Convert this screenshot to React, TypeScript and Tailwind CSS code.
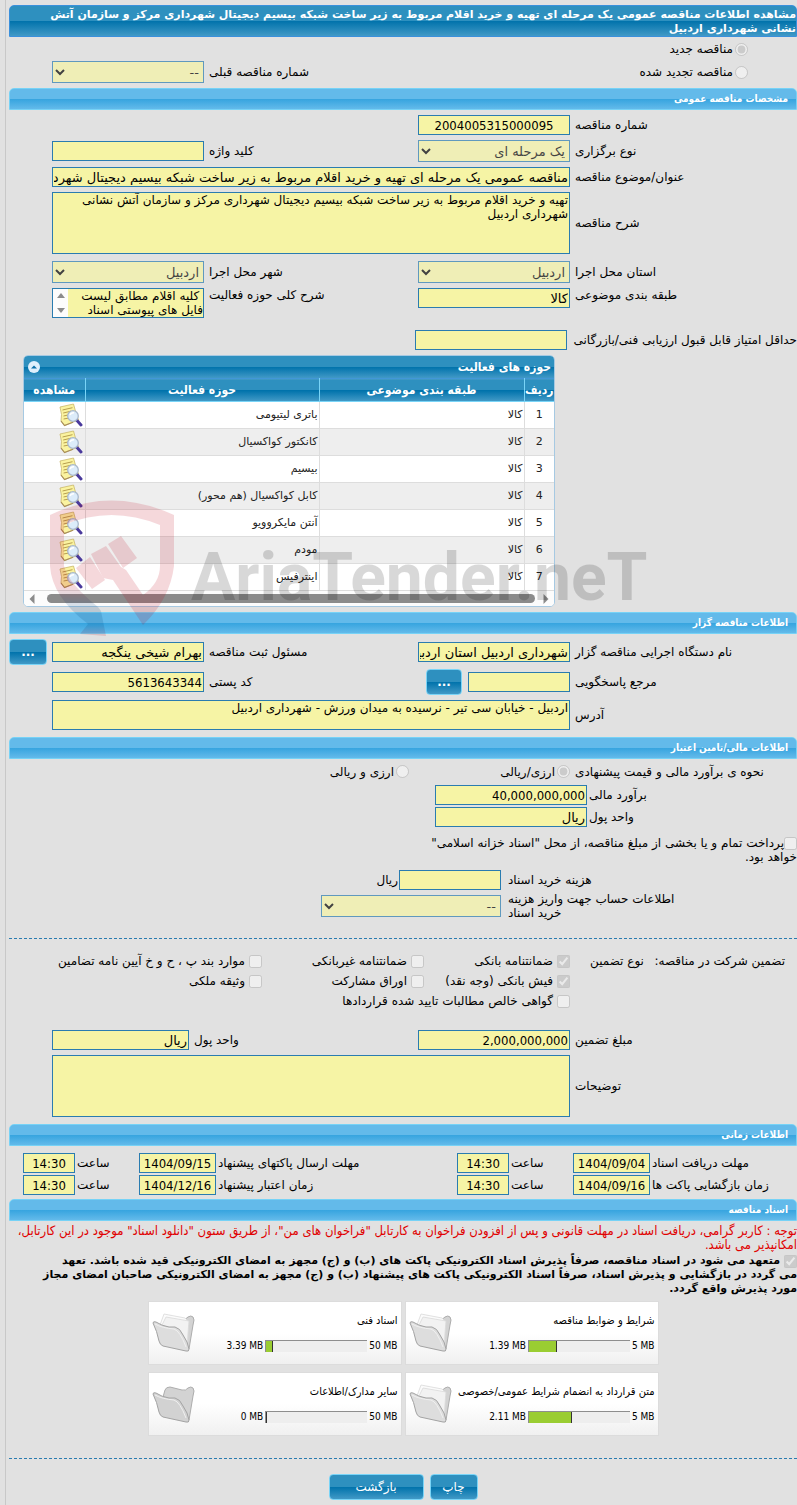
import type { ReactNode } from 'react';

const CONDENSED = "font-['DejaVu_Sans_Condensed','DejaVu_Sans',sans-serif]";
const FIELD = 'block h-5 w-full min-w-0 border border-[#2a7cb0] bg-[#f6f4a5] px-px text-[13px] leading-[18px] text-black outline-none';
const AREA =
  'block w-full resize-none overflow-hidden border border-[#2a7cb0] bg-[#f6f4a5] px-px text-[12px] leading-[14px] text-black outline-none';
const ROW = 'grid grid-cols-[222px_152px_1fr_152px_38px] items-center gap-x-[5px]';
const LIGHT_BAR = 'bg-[linear-gradient(#63baea_0%,#63baea_50%,#36a4df_50%,#63baea_100%)]';
const DARK_BAR = 'bg-[linear-gradient(#2e90bf_0%,#2e90bf_50%,#0072ab_50%,#4199c6_100%)]';
const DASHES = 'h-px border-0 bg-[repeating-linear-gradient(to_right,#2a7cb0_0px,#2a7cb0_3px,transparent_3px,transparent_5px)]';

type TextFieldProps = {
  id: string;
  value?: string;
  numeric?: boolean;
  center?: boolean;
};

const TextField = ({ id, value = '', numeric = false, center = false }: TextFieldProps) => (
  <input
    id={id}
    type="text"
    readOnly
    defaultValue={value}
    className={`${FIELD} ${numeric ? CONDENSED : ''} ${center ? 'text-center' : ''}`}
  />
);

type LabelProps = {
  htmlFor: string;
  children: ReactNode;
};

const Label = ({ htmlFor, children }: LabelProps) => (
  <label htmlFor={htmlFor} className="block text-end">
    {children}
  </label>
);

const SelectField = ({ id, value }: { id: string; value: string }) => (
  <select
    id={id}
    disabled
    defaultValue={value}
    className="block h-[22px] w-full border border-[#2a7cb0] bg-[#f6f4a5] text-[13px] text-black opacity-70"
  >
    <option>{value}</option>
  </select>
);

const SectionBar = ({ children }: { children: ReactNode }) => (
  <h2
    className={`h-[22px] rounded-t-[5px] border border-[#76d2f6] px-2 text-[10px] leading-[20px] font-bold text-white ${CONDENSED} ${LIGHT_BAR}`}
  >
    {children}
  </h2>
);

type BlueButtonProps = {
  label: string;
  className: string;
};

const BlueButton = ({ label, className }: BlueButtonProps) => (
  <button
    type="button"
    className={`h-[26px] rounded-[4px] border border-[#79d4f7] text-[12px] text-white ${DARK_BAR} ${className}`}
  >
    {label}
  </button>
);

type TickProps = {
  id: string;
  label: string;
  checked?: boolean;
  className?: string;
};

const Tick = ({ id, label, checked = false, className = '' }: TickProps) => (
  <div className={`flex h-5 items-center gap-1 whitespace-nowrap ${className}`}>
    <input id={id} type="checkbox" disabled defaultChecked={checked} className="size-[13px] shrink-0" />
    <label htmlFor={id}>{label}</label>
  </div>
);

type RadioProps = {
  id: string;
  name: string;
  label: string;
  checked?: boolean;
};

const Radio = ({ id, name, label, checked = false }: RadioProps) => (
  <div className="flex items-center gap-[2px] whitespace-nowrap">
    <input id={id} name={name} type="radio" disabled defaultChecked={checked} className="size-[13px] shrink-0" />
    <label htmlFor={id}>{label}</label>
  </div>
);

const ViewIcon = () => (
  <svg width="24" height="24" viewBox="0 0 24 24" aria-hidden="true">
    <path d="M1 4 L14.5 1 L17 10 L19.5 17 L5.5 22.5 L2 18 Q3.500 12 1 4Z" fill="#faf3a0" stroke="#c9b76a" strokeWidth="0.8" />
    <path d="M3.500 7 L13.500 4.700 M4.200 10 L12 8.200 M4.500 13 L10 11.800 M4.600 16 L10 15" stroke="#b89f4e" strokeWidth="1" />
    <path d="M2 18 L5.5 22.5 L14 19.300" fill="none" stroke="#a98f5a" strokeWidth="1.2" />
    <path d="M18 17.500 L22 22" stroke="#4a3a9c" strokeWidth="3" strokeLinecap="round" />
    <circle cx="14" cy="13" r="5.3" fill="#dcecfa" stroke="#a9b8cc" strokeWidth="1.3" />
    <path d="M11 12 Q12 9.500 15 9.700" fill="none" stroke="#ffffff" strokeWidth="1.4" />
  </svg>
);

const FolderIcon = ({ filled }: { filled: boolean }) => (
  <svg width="44" height="40" viewBox="0 0 44 40" aria-hidden="true">
    <path
      d="M11 13 L13 6 Q14 3 18 3 L30 6 Q34 7 36 4 Q39 2 41 4 Q43 6 41 12 L37 36Z"
      fill="#d3d3d3"
      stroke="#adadad"
      strokeWidth="1"
    />
    {filled && (
      <g stroke="#d9d9d9" strokeWidth="0.8">
        <path d="M8 12 L12 1 L33 5 L36 8 L36 32 L30 20Z" fill="#fbfbfb" />
        <path d="M10 12 L14 4 L37 8 L35 32 L30 20Z" fill="#f2f2f2" />
      </g>
    )}
    <path
      d="M1 10 Q1 8 4 9 Q10 13 17 14 L23 14 Q28 15 31 22 Q36 29 37 36 Q37 39 34 38 L11 33 Q8 32 7 28 Q5 18 1 10Z"
      fill={filled ? '#dddddd' : '#d2d2d2'}
      stroke="#a3a3a3"
      strokeWidth="1"
    />
    <path d="M3 11 Q10 15 22 16 Q28 18 34 34" fill="none" stroke="#f0f0f0" strokeWidth="1" />
  </svg>
);

const activities = [
  'باتری لیتیومی',
  'کانکتور کواکسیال',
  'بیسیم',
  'کابل کواکسیال (هم محور)',
  'آنتن مایکروویو',
  'مودم',
  'اینترفیس'
];

const ActivityTable = () => (
  <div className="ms-[242px] me-[14px] overflow-hidden rounded-[5px] border border-[#a6c9e2] bg-white">
    <div className={`flex h-[22px] items-center justify-between px-[3px] ${DARK_BAR}`}>
      <h3 className={`text-[12px] font-bold text-white ${CONDENSED}`}>حوزه های فعالیت</h3>
      <button
        type="button"
        aria-label="بستن"
        className="mx-px flex size-3 items-center justify-center rounded-full bg-[#dfeffc]"
      >
        <svg width="6" height="4" viewBox="0 0 6 4" aria-hidden="true">
          <path d="M0 3.500 L3 0.500 L6 3.500Z" fill="#0b6fa8" />
        </svg>
      </button>
    </div>
    <table className="w-full table-fixed border-collapse text-[11px] leading-[14px] text-[#222222]">
      <colgroup>
        <col className="w-[30px]" />
        <col className="w-[205px]" />
        <col />
        <col className="w-[61px]" />
      </colgroup>
      <thead>
        <tr
          className={`h-[23px] border-t border-b border-t-[#4297d7] border-b-[#79d4f7] text-[12px] text-white ${CONDENSED} ${DARK_BAR}`}
        >
          <th className="border-e border-[#79d4f7] p-0">ردیف</th>
          <th className="border-e border-[#79d4f7] p-0">طبقه بندی موضوعی</th>
          <th className="border-e border-[#79d4f7] p-0">حوزه فعالیت</th>
          <th className="p-0">مشاهده</th>
        </tr>
      </thead>
      <tbody>
        {activities.map((activity, i) => (
          <tr key={activity} className="h-[27px] border-b border-[#dddddd] even:bg-[#eeeeee]">
            <td className="border-e border-[#dddddd] p-0 text-center">{i + 1}</td>
            <td className="border-e border-[#dddddd] px-px py-0">کالا</td>
            <td className="border-e border-[#dddddd] px-px py-0">{activity}</td>
            <td className="px-[2px] py-0">
              <button type="button" aria-label="مشاهده" className="block">
                <ViewIcon />
              </button>
            </td>
          </tr>
        ))}
      </tbody>
    </table>
    <div className="flex h-[15px] items-center bg-[#fcfcfc] px-[5px]">
      <svg width="6" height="10" viewBox="0 0 6 10" aria-hidden="true">
        <path d="M0.500 0 L5.500 5 L0.500 10Z" fill="#8b8b8b" />
      </svg>
      <div className="ms-2 me-3 h-[9px] flex-1 rounded-full bg-[#8b8b8b]" />
      <svg width="6" height="10" viewBox="0 0 6 10" aria-hidden="true">
        <path d="M5.500 0 L0.500 5 L5.500 10Z" fill="#8b8b8b" />
      </svg>
    </div>
  </div>
);

const Watermark = () => (
  <div dir="ltr" className="pointer-events-none absolute top-[144px] left-[40px] flex opacity-15">
    <svg width="126" height="138" viewBox="0 0 126 138" aria-hidden="true">
      <defs>
        <linearGradient id="shield-tail" gradientUnits="userSpaceOnUse" x1="0" y1="67" x2="0" y2="137">
          <stop offset="0.3" stopColor="#c00018" />
          <stop offset="0.55" stopColor="#00407a" />
          <stop offset="0.85" stopColor="#00407a" />
          <stop offset="1" stopColor="#c00018" />
        </linearGradient>
      </defs>
      <path
        d="M1 67 L1 16 Q62 -13 125 16 L125 67 Q121 100 94 126 L64 81 L54 79 L42 55 L57 47 L72 68 L77 71 L94 96 Q111 84 111 67 L111 26 Q62 6 15 26 L15 67Z"
        fill="#c00018"
      />
      <path d="M59 45 L72 37 L88 59 L74 69Z M27 69 L41 58 L56 81 L43 90Z" fill="#c00018" />
      <path d="M1 67 L15 67 Q19 84 49 108 L52 112 L57 137 L31 135 L39 125 Q3 98 1 67Z" fill="url(#shield-tail)" />
    </svg>
    <span className="ml-4 pt-[34px] font-[Roboto,sans-serif] text-[66px] leading-[90px] font-bold text-black">
      AriaTender.neT
    </span>
  </div>
);

const documents = [
  { title: 'شرایط و ضوابط مناقصه', used: 1.39, limit: 5 },
  { title: 'اسناد فنی', used: 3.39, limit: 50 },
  { title: 'متن قرارداد به انضمام شرایط عمومی/خصوصی', used: 2.11, limit: 5 },
  { title: 'سایر مدارک/اطلاعات', used: 0, limit: 50 }
];

const DocumentCard = ({ title, used, limit }: (typeof documents)[number]) => (
  <a
    href="#"
    dir="ltr"
    className={`flex h-16 items-center border border-[#dcdcdc] bg-[linear-gradient(#ffffff_50%,#f0f0f0)] px-[3px] text-[11px] text-black ${CONDENSED}`}
  >
    <FolderIcon filled={used > 0} />
    <div className="flex flex-1 flex-col items-end gap-[11px]">
      <span dir="rtl" className="whitespace-nowrap">
        {title}
      </span>
      <div className="flex items-center gap-[2px] text-[10px] leading-[13px] whitespace-nowrap">
        <span>{used} MB</span>
        <div className="h-3 w-[102px] border-t border-l border-[#8e8e8e] bg-[#eeeeee]">
          <div className="h-full border-r border-[#333333] bg-[#9acd32]" style={{ width: `${(used / limit) * 100}%` }} />
        </div>
        <span>{limit} MB</span>
      </div>
    </div>
  </a>
);

const DeadlineRow = ({ fields }: { fields: { id: string; label: string; date: string }[] }) => (
  <div className="grid grid-cols-[145px_77px_60px_52px_1fr_77px_60px_52px_12px] items-center gap-x-[2px] whitespace-nowrap">
    {fields.map(({ id, label, date }) => (
      <div key={id} className="contents">
        <Label htmlFor={`${id}-date`}>{label}</Label>
        <TextField id={`${id}-date`} value={date} numeric center />
        <Label htmlFor={`${id}-time`}>ساعت</Label>
        <TextField id={`${id}-time`} value="14:30" numeric center />
      </div>
    ))}
  </div>
);

export default function App() {
  return (
    <div
      dir="rtl"
      className="bg-[#e1e1e1] pl-[5px] font-['DejaVu_Sans',sans-serif] text-[12px] leading-[14px] text-black"
    >
      <main className="border-l border-[#c8c8c8] pt-[5px] pb-[5px] pl-[3px]">
        <h1 className={`min-h-8 rounded-t-[5px] border border-[#3a90dc] pt-[2px] text-[11px] font-bold text-white ${DARK_BAR}`}>
          مشاهده اطلاعات مناقصه عمومی یک مرحله ای تهیه و خرید اقلام مربوط به زیر ساخت شبکه بیسیم دیجیتال شهرداری مرکز و
          سازمان آتش
          <br />
          نشانی شهرداری اردبیل
        </h1>

        <div className="mt-1 flex h-4 items-center ps-[49px]">
          <Radio id="tender-new" name="tender-kind" label="مناقصه جدید" checked />
        </div>
        <div className={`mt-1 ${ROW}`}>
          <div className="col-span-2 ps-[49px]">
            <Radio id="tender-renewed" name="tender-kind" label="مناقصه تجدید شده" />
          </div>
          <Label htmlFor="previous-number">شماره مناقصه قبلی</Label>
          <SelectField id="previous-number" value="--" />
        </div>

        <section className="mt-[5px]">
          <SectionBar>مشخصات مناقصه عمومی</SectionBar>
          <div className="mt-[5px] flex flex-col gap-[5px]">
            <div className={ROW}>
              <Label htmlFor="tender-number">شماره مناقصه</Label>
              <TextField id="tender-number" value="2004005315000095" numeric center />
            </div>
            <div className={ROW}>
              <Label htmlFor="tender-type">نوع برگزاری</Label>
              <SelectField id="tender-type" value="یک مرحله ای" />
              <Label htmlFor="keyword">کلید واژه</Label>
              <TextField id="keyword" />
            </div>
            <div className={ROW}>
              <Label htmlFor="subject">عنوان/موضوع مناقصه</Label>
              <div className="col-span-3">
                <TextField
                  id="subject"
                  value="مناقصه عمومی یک مرحله ای تهیه و خرید اقلام مربوط به زیر ساخت شبکه بیسیم دیجیتال شهرداری مرکز و سازمان آتش نشانی شهرداری اردبیل"
                />
              </div>
            </div>
            <div className={ROW}>
              <Label htmlFor="description">شرح مناقصه</Label>
              <textarea
                id="description"
                readOnly
                defaultValue="تهیه و خرید اقلام مربوط به زیر ساخت شبکه بیسیم دیجیتال شهرداری مرکز و سازمان آتش نشانی شهرداری اردبیل"
                className={`col-span-3 h-[62px] ${AREA}`}
              />
            </div>
            <div className={`mt-[2px] ${ROW}`}>
              <Label htmlFor="province">استان محل اجرا</Label>
              <SelectField id="province" value="اردبیل" />
              <Label htmlFor="city">شهر محل اجرا</Label>
              <SelectField id="city" value="اردبیل" />
            </div>
            <div className="grid grid-cols-[222px_152px_1fr_152px_38px] items-start gap-x-[5px]">
              <Label htmlFor="category">طبقه بندی موضوعی</Label>
              <TextField id="category" value="کالا" />
              <Label htmlFor="activity-summary">شرح کلی حوزه فعالیت</Label>
              <div className="flex h-[30px] border border-[#2a7cb0]">
                <textarea
                  id="activity-summary"
                  readOnly
                  defaultValue={' کلیه اقلام مطابق لیست\nفایل های پیوستی اسناد'}
                  className="block h-full min-w-0 flex-1 resize-none overflow-hidden bg-[#f6f4a5] text-[12px] leading-[14px] whitespace-pre outline-none"
                />
                <div className="flex w-[15px] flex-col items-center justify-between bg-[#fcfcfc] py-1">
                  <svg width="8" height="5" viewBox="0 0 8 5" aria-hidden="true">
                    <path d="M0 5 L4 0 L8 5Z" fill="#8b8b8b" />
                  </svg>
                  <svg width="8" height="5" viewBox="0 0 8 5" aria-hidden="true">
                    <path d="M0 0 L4 5 L8 0Z" fill="#8b8b8b" />
                  </svg>
                </div>
              </div>
            </div>
          </div>
          <div className="mt-3 grid grid-cols-[222px_152px] items-center gap-x-2 whitespace-nowrap">
            <Label htmlFor="min-score">حداقل امتیاز قابل قبول ارزیابی فنی/بازرگانی</Label>
            <TextField id="min-score" numeric />
          </div>
        </section>

        <div className="relative z-10 mt-[5px]">
          <ActivityTable />
          <Watermark />
        </div>

        <section className="mt-[5px]">
          <SectionBar>اطلاعات مناقصه گزار</SectionBar>
          <div className={`mt-[5px] ${ROW}`}>
            <Label htmlFor="organization">نام دستگاه اجرایی مناقصه گزار</Label>
            <TextField id="organization" value="شهرداری اردبیل استان اردبیل" />
            <Label htmlFor="registrar">مسئول ثبت مناقصه</Label>
            <TextField id="registrar" value="بهرام شیخی ینگجه" />
            <BlueButton label="..." className="w-full font-bold" />
          </div>
          <div className={`mt-1 ${ROW}`}>
            <Label htmlFor="contact">مرجع پاسخگویی</Label>
            <div className="flex items-center gap-[6px]">
              <div className="w-[102px]">
                <TextField id="contact" />
              </div>
              <BlueButton label="..." className="w-9 font-bold" />
            </div>
            <Label htmlFor="postal-code">کد پستی</Label>
            <TextField id="postal-code" value="5613643344" numeric />
          </div>
          <div className={`mt-[5px] ${ROW}`}>
            <Label htmlFor="address">آدرس</Label>
            <textarea
              id="address"
              readOnly
              defaultValue="اردبیل - خیابان سی تیر - نرسیده به میدان ورزش - شهرداری اردبیل"
              className={`col-span-3 h-[30px] ${AREA}`}
            />
          </div>
        </section>

        <section className="mt-[7px]">
          <SectionBar>اطلاعات مالی/تامین اعتبار</SectionBar>
          <div className="mt-1 grid h-[17px] grid-cols-[222px_156px_1fr] items-center gap-x-[5px]">
            <span className="text-end">نحوه ی برآورد مالی و قیمت پیشنهادی</span>
            <Radio id="rial-only" name="currency-kind" label="ارزی/ریالی" checked />
            <Radio id="rial-and-foreign" name="currency-kind" label="ارزی و ریالی" />
          </div>
          <div className="mt-[5px] grid grid-cols-[208px_152px] items-center gap-x-[2px] gap-y-[2px]">
            <Label htmlFor="estimate">برآورد مالی</Label>
            <TextField id="estimate" value="40,000,000,000" numeric />
            <Label htmlFor="estimate-unit">واحد پول</Label>
            <TextField id="estimate-unit" value="ریال" />
          </div>
          <div className="mt-[9px] max-w-[380px]">
            <input id="treasury" type="checkbox" disabled className="size-[13px] align-bottom" />
            <label htmlFor="treasury">پرداخت تمام و یا بخشی از مبلغ مناقصه، از محل "اسناد خزانه اسلامی" خواهد بود.</label>
          </div>
          <div className="mt-[6px] grid grid-cols-[289px_102px_1fr] items-center gap-x-[7px]">
            <Label htmlFor="documents-cost">هزینه خرید اسناد</Label>
            <TextField id="documents-cost" numeric />
            <span className="-ms-[6px]">ریال</span>
          </div>
          <div className="mt-[2px] grid grid-cols-[289px_180px] items-center gap-x-[7px]">
            <div className="ps-[120px]">
              <Label htmlFor="deposit-account">اطلاعات حساب جهت واریز هزینه خرید اسناد</Label>
            </div>
            <SelectField id="deposit-account" value="--" />
          </div>
        </section>

        <hr className={`mt-[18px] ${DASHES}`} />

        <section className="mt-3">
          <div className="grid grid-cols-[222px_141px_157px_1fr] items-center gap-x-[5px]">
            <div className="flex justify-between ps-3 pe-[15px] whitespace-nowrap">
              <span>تضمین شرکت در مناقصه:</span>
              <span>نوع تضمین</span>
            </div>
            <Tick id="bank-guarantee" label="ضمانتنامه بانکی" checked />
            <Tick id="non-bank-guarantee" label="ضمانتنامه غیربانکی" />
            <Tick id="bylaw-items" label="موارد بند پ ، ح و خ آیین نامه تضامین" />
            <Tick id="bank-slip" label="فیش بانکی (وجه نقد)" checked className="col-start-2" />
            <Tick id="bonds" label="اوراق مشارکت" />
            <Tick id="property" label="وثیقه ملکی" />
            <Tick id="net-claims" label="گواهی خالص مطالبات تایید شده قراردادها" className="col-span-2 col-start-2" />
          </div>
          <div className="mt-[19px] grid grid-cols-[222px_152px_1fr_137px_38px] items-center gap-x-[5px]">
            <Label htmlFor="guarantee-amount">مبلغ تضمین</Label>
            <TextField id="guarantee-amount" value="2,000,000,000" numeric />
            <Label htmlFor="guarantee-unit">واحد پول</Label>
            <TextField id="guarantee-unit" value="ریال" />
          </div>
          <div className={`mt-[5px] ${ROW}`}>
            <Label htmlFor="notes">توضیحات</Label>
            <textarea id="notes" readOnly className={`col-span-3 h-[62px] ${AREA}`} />
          </div>
        </section>

        <section className="mt-[7px]">
          <SectionBar>اطلاعات زمانی</SectionBar>
          <div className="mt-[7px] flex flex-col gap-[2px]">
            <DeadlineRow
              fields={[
                { id: 'receive', label: 'مهلت دریافت اسناد', date: '1404/09/04' },
                { id: 'submit', label: 'مهلت ارسال پاکتهای پیشنهاد', date: '1404/09/15' }
              ]}
            />
            <DeadlineRow
              fields={[
                { id: 'opening', label: 'زمان بازگشایی پاکت ها', date: '1404/09/16' },
                { id: 'validity', label: 'زمان اعتبار پیشنهاد', date: '1404/12/16' }
              ]}
            />
          </div>
        </section>

        <section className="mt-1">
          <SectionBar>اسناد مناقصه</SectionBar>
          <p className={`mt-[3px] text-[13px] leading-[14px] text-[#e00000] ${CONDENSED}`}>
            توجه : کاربر گرامی، دریافت اسناد در مهلت قانونی و پس از افزودن فراخوان به کارتابل "فراخوان های من"، از طریق ستون
            "دانلود اسناد" موجود در این کارتابل، امکانپذیر می باشد.
          </p>
          <div className="mt-[2px] text-[11px] leading-[14px] font-bold">
            <input id="commitment" type="checkbox" disabled defaultChecked className="me-1 size-[13px] align-bottom" />
            <label htmlFor="commitment">
              متعهد می شود در اسناد مناقصه، صرفاً پذیرش اسناد الکترونیکی پاکت های (ب) و (ج) مجهز به امضای الکترونیکی قید شده
              باشد. تعهد
              <br />
              می گردد در بازگشایی و پذیرش اسناد، صرفاً اسناد الکترونیکی پاکت های پیشنهاد (ب) و (ج) مجهز به امضای الکترونیکی
              صاحبان امضای مجاز
              <br />
              مورد پذیرش واقع گردد.
            </label>
          </div>
          <div className="mt-[5px] grid grid-cols-[254px_254px] justify-center gap-x-[3px] gap-y-[7px]">
            {documents.map((doc) => (
              <DocumentCard key={doc.title} {...doc} />
            ))}
          </div>
        </section>

        <hr className={`mt-[22px] ${DASHES}`} />

        <div className="mt-[15px] flex justify-center gap-[6px]">
          <BlueButton label="چاپ" className="w-12" />
          <BlueButton label="بازگشت" className="w-[95px]" />
        </div>
      </main>
    </div>
  );
}
